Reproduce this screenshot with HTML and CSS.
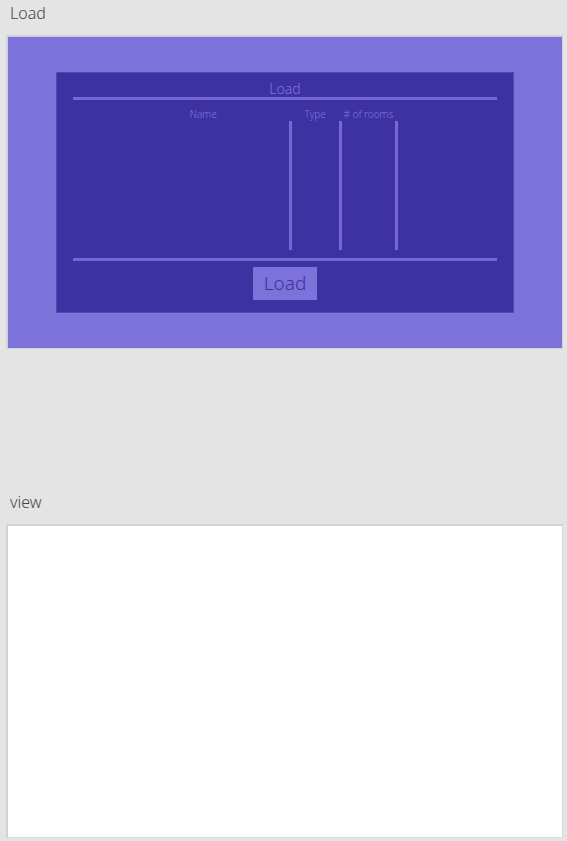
FILE: index.html
```html
<!DOCTYPE html>
<html lang="en">
<head>
<meta charset="utf-8">
<meta name="viewport" content="width=device-width, initial-scale=1">
<title>Artboards</title>
<link rel="stylesheet" href="styles.css">
</head>
<body>
<main class="canvas">
  <section class="board">
    <h2 class="board-name">Load</h2>
    <div class="artboard artboard-load">
      <div class="panel">
        <h3 class="panel-title">Load</h3>
        <div class="panel-body">
          <table class="rooms">
            <colgroup>
              <col class="col-name">
              <col class="col-type">
              <col class="col-count">
            </colgroup>
            <thead>
              <tr><th scope="col">Name</th><th scope="col">Type</th><th scope="col"># of rooms</th></tr>
            </thead>
            <tbody>
              <tr><td></td><td></td><td></td></tr>
            </tbody>
          </table>
        </div>
        <button class="load-button" type="button">Load</button>
      </div>
    </div>
  </section>
  <section class="board">
    <h2 class="board-name">view</h2>
    <div class="artboard"></div>
  </section>
</main>
</body>
</html>
```
FILE: styles.css
```css
* {
  box-sizing: border-box;
}

body {
  margin: 0;
  background: #e4e4e4;
  font-family: "Noto Sans", "Open Sans", sans-serif;
}

.canvas {
  display: flex;
  flex-direction: column;
  gap: 140px;
  padding: 0 4px 3px 6px;
}

.board-name {
  margin: 0;
  padding: 1px 4px 9px;
  color: #484848;
  font-size: 16px;
  font-weight: 300;
  line-height: 25px;
}

.artboard {
  min-height: 314px;
  border: 2px solid #d2d2d2;
  border-right: 1px solid #d8d8d8;
  border-bottom: 1px solid #dedede;
  background: #fff;
}

.artboard-load {
  padding: 35px 48px;
  border-color: #d2d1da;
  background: #7d71da;
}

.panel {
  display: flex;
  flex-direction: column;
  align-items: center;
  padding: 8px 16px 12px;
  border: 1px solid #5446b8;
  background: #3e31a2;
  color: #8175de;
}

.panel-title {
  margin: 0;
  font-size: 14px;
  font-weight: 300;
  line-height: 16px;
}

.panel-body {
  align-self: stretch;
  margin-bottom: 6px;
  padding: 7px 0 8px;
  border: solid #7668d3;
  border-width: 3px 0;
}

.rooms {
  width: 66%;
  margin-left: 45px;
  border-collapse: separate;
  border-spacing: 0;
  table-layout: fixed;
}

.col-name {
  width: 62%;
}

.col-type {
  width: 18%;
}

.col-count {
  width: 20%;
}

.rooms th {
  padding: 0 3px 0 0;
  font-size: 10px;
  font-weight: 300;
  line-height: 14px;
  white-space: nowrap;
}

.rooms td {
  height: 129px;
  padding: 0;
  border-right: 3px solid #7668d3;
}

.load-button {
  padding: 0 11px;
  border: 0;
  background: #7d71da;
  color: #3e31a2;
  font-family: inherit;
  font-size: 19px;
  font-weight: 300;
  line-height: 33px;
}
```
